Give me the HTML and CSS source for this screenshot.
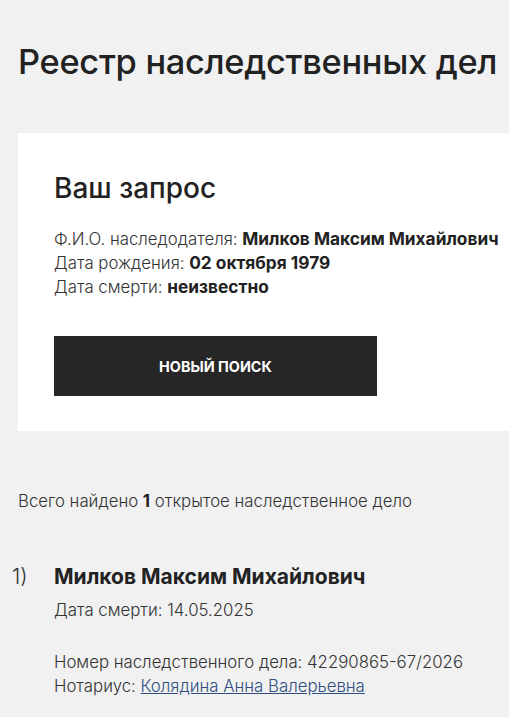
FILE: index.html
```html
<!DOCTYPE html>
<html lang="ru">
<head>
    <meta charset="UTF-8">
    <title>Реестр наследственных дел</title>
    <link rel="stylesheet" href="styles.css">
</head>
<body>

    <div class="page">
        <h1 class="page-title">Реестр наследственных дел</h1>

        <div class="query-card">
            <h2>Ваш запрос</h2>
            <div class="query-info">
                <p>Ф.И.О. наследодателя: <strong>Милков Максим Михайлович</strong></p>
                <p>Дата рождения: <strong>02 октября 1979</strong></p>
                <p>Дата смерти: <strong>неизвестно</strong></p>
            </div>
            <button class="btn-search" type="button">Новый поиск</button>
        </div>

        <p class="total">Всего найдено <strong>1</strong> открытое наследственное дело</p>

        <ol class="results">
            <li class="result-item">
                <span class="num">1)</span>
                <div class="result-body">
                    <h3>Милков Максим Михайлович</h3>
                    <p class="death">Дата смерти: 14.05.2025</p>
                    <p>Номер наследственного дела: 42290865-67/2026</p>
                    <p>Нотариус: <a href="#">Колядина Анна Валерьевна</a></p>
                </div>
            </li>
        </ol>
    </div>

</body>
</html>
```

FILE: styles.css
```css
html, body {
    overflow-x: hidden;
}
body {
    font-family: Inter, 'Liberation Sans', Arial, sans-serif;
    margin: 0;
    padding: 0;
    color: #222;
    background-color: #f1f1f1;
}
.page {
    width: 620px;
    padding: 0 0 40px 18px;
}
.page-title {
    margin: 0;
    padding-top: 42px;
    font-size: 34.4px;
    font-weight: 550;
    line-height: 40px;
    letter-spacing: -0.3px;
}
.query-card {
    background-color: #fff;
    margin-top: 51px;
    padding: 40px 36px 35px;
}
.query-card h2 {
    margin: 0;
    font-size: 28px;
    font-weight: 500;
    line-height: 30px;
}
.query-info {
    margin-top: 24px;
}
.query-info p {
    margin: 0;
    font-size: 16.8px;
    font-weight: 300;
    line-height: 24px;
    color: #333;
}
.query-info strong {
    font-size: 17.3px;
    font-weight: 700;
    color: #222;
}
.btn-search {
    display: block;
    margin-top: 37px;
    width: 323px;
    height: 60px;
    border: none;
    background-color: #262626;
    color: #fff;
    font-family: inherit;
    font-size: 14.4px;
    font-weight: 700;
    text-transform: uppercase;
}
.total {
    margin: 58px 0 0;
    font-size: 16.8px;
    font-weight: 300;
    line-height: 24px;
    color: #333;
}
.total strong {
    font-weight: 700;
    color: #222;
}
.results {
    list-style: none;
    margin: 51px 0 0;
    padding: 0;
}
.result-item {
    display: flex;
}
.num {
    width: 42px;
    margin-left: -6px;
    font-size: 21px;
    font-weight: 300;
    line-height: 26px;
    color: #333;
}
.result-body h3 {
    margin: 0;
    font-size: 21px;
    line-height: 26px;
    font-weight: 700;
}
.result-body p {
    margin: 0;
    font-size: 16.8px;
    font-weight: 300;
    line-height: 24px;
    color: #333;
}
.result-body .death {
    margin-top: 8px;
    margin-bottom: 28px;
}
.result-body a {
    color: #2f4f82;
}
```
